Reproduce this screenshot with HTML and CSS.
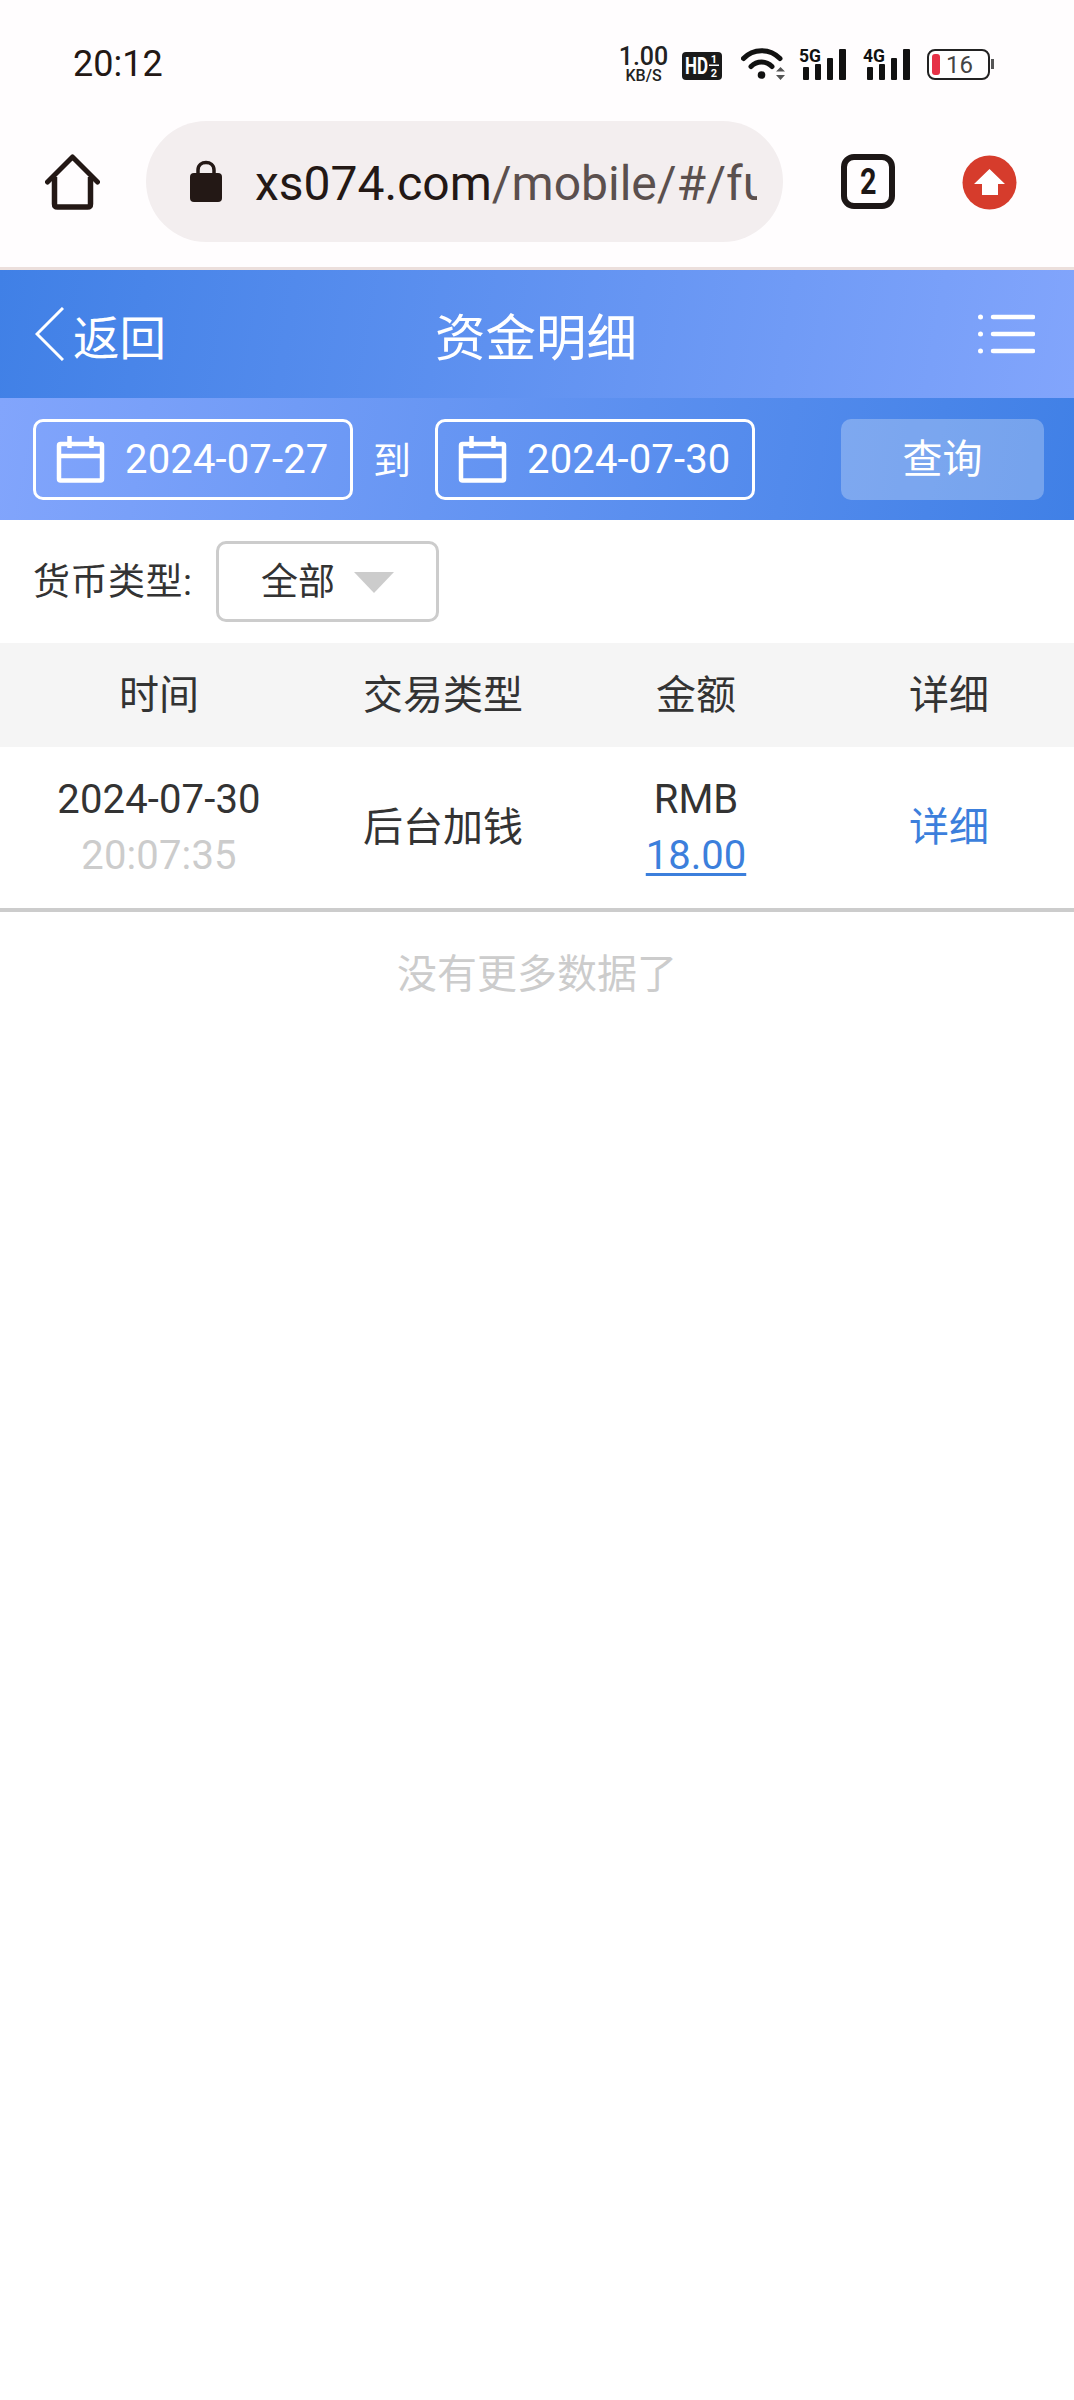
FILE: index.html
```html
<!DOCTYPE html>
<html lang="zh-CN">
<head>
  <meta charset="UTF-8" />
  <meta name="viewport" content="width=device-width, initial-scale=1.0"/>
  <title>资金明细</title>
  <link rel="stylesheet" href="styles.css">
</head>
<body>
  <div class="status">
    <span class="clock">20:12</span>
    <div class="status-icons">
      <div class="speed"><b>1.00</b><i>KB/S</i></div>
      <svg class="hd" width="40" height="28" viewBox="0 0 40 28">
        <rect width="40" height="28" rx="4" fill="#1a1a1a"/>
        <text x="3" y="22" class="hd-text" textLength="23" lengthAdjust="spacingAndGlyphs">HD</text>
        <text x="32" y="11" class="hd-frac" text-anchor="middle">1</text>
        <rect x="27" y="12.500" width="10" height="1.500" fill="#fff"/>
        <text x="32" y="25" class="hd-frac" text-anchor="middle">2</text>
      </svg>
      <svg class="wifi" width="44" height="33" viewBox="0 0 44 33">
        <path d="M2.500 11.500C12 1 29 1 39 11.500" fill="none" stroke="#111" stroke-width="5" stroke-linecap="round"/>
        <path d="M10 19.500C16 13.500 25 13.500 31 19.500" fill="none" stroke="#111" stroke-width="5" stroke-linecap="round"/>
        <circle cx="20.500" cy="28" r="3.800" fill="#111"/>
        <path d="M35 24.500L39.500 20L44 24.500Z M35 28L44 28L39.500 33Z" fill="#555"/>
      </svg>
      <svg class="signal" width="47" height="39" viewBox="0 -6 47 39">
        <text x="0" y="15" class="net" textLength="22" lengthAdjust="spacingAndGlyphs">5G</text>
        <rect x="4" y="20" width="6" height="13" rx="1" fill="#111"/>
        <rect x="16" y="17" width="6" height="16" rx="1" fill="#111"/>
        <rect x="28" y="11" width="6" height="22" rx="1" fill="#111"/>
        <rect x="40" y="2" width="7" height="31" rx="1" fill="#111"/>
      </svg>
      <svg class="signal" width="47" height="39" viewBox="0 -6 47 39">
        <text x="0" y="15" class="net" textLength="22" lengthAdjust="spacingAndGlyphs">4G</text>
        <rect x="4" y="20" width="6" height="13" rx="1" fill="#111"/>
        <rect x="16" y="17" width="6" height="16" rx="1" fill="#111"/>
        <rect x="28" y="11" width="6" height="22" rx="1" fill="#111"/>
        <rect x="40" y="2" width="7" height="31" rx="1" fill="#111"/>
      </svg>
      <svg class="battery" width="67" height="31" viewBox="0 0 67 31">
        <rect x="1" y="1" width="61" height="29" rx="7" fill="#fff" stroke="#222" stroke-width="2"/>
        <rect x="5" y="5" width="8" height="21" rx="3" fill="#e63146"/>
        <text x="19" y="24" class="batt-num">16</text>
        <rect x="64" y="10" width="3" height="10" fill="#555"/>
      </svg>
    </div>
  </div>

  <div class="toolbar">
    <svg class="home" width="55" height="56" viewBox="0 0 55 56">
      <path d="M2.500 28L27.500 3L52.500 28" fill="none" stroke="#231815" stroke-width="5" stroke-linecap="round" stroke-linejoin="round"/>
      <path d="M9.500 23V50Q9.500 53 12.500 53H42.500Q45.500 53 45.500 50V23" fill="none" stroke="#231815" stroke-width="5.500"/>
    </svg>
    <div class="urlbar">
      <svg class="lock" width="32" height="44" viewBox="0 0 32 44">
        <path d="M8 18V11C8 1 24 1 24 11V18" fill="none" stroke="#231815" stroke-width="3.500"/>
        <rect x="0" y="14" width="32" height="29" rx="4" fill="#231815"/>
      </svg>
      <div class="url"><span class="host">xs074.com</span>/mobile/#/fu</div>
    </div>
    <div class="tabs"><span>2</span></div>
    <svg class="upgrade" width="55" height="55" viewBox="0 0 55 55">
      <circle cx="27.500" cy="27.500" r="27" fill="#d63c2c"/>
      <path d="M27.500 14L43 29H36V40H20V29H12Z" fill="#fff"/>
    </svg>
  </div>

  <header class="topbar">
    <a class="back">
      <svg width="29" height="54" viewBox="0 0 29 54"><path d="M28 1L2 27L28 53" fill="none" stroke="#fff" stroke-width="3"/></svg>
      <span>返回</span>
    </a>
    <h1 class="title">资金明细</h1>
    <div class="menu-wrap">
      <svg class="menu" width="57" height="40" viewBox="0 0 57 40">
        <circle cx="2.500" cy="3" r="2.500" fill="#fff"/>
        <circle cx="2.500" cy="20" r="2.500" fill="#fff"/>
        <circle cx="2.500" cy="37" r="2.500" fill="#fff"/>
        <path d="M15 3H55M15 20H55M15 37H55" stroke="#fff" stroke-width="4.500" stroke-linecap="round"/>
      </svg>
    </div>
  </header>

  <div class="filter">
    <div class="date">
      <svg width="49" height="48" viewBox="0 0 48 48"><use href="#cal"/></svg>
      <span>2024-07-27</span>
    </div>
    <span class="to">到</span>
    <div class="date">
      <svg width="49" height="48" viewBox="0 0 48 48"><use href="#cal"/></svg>
      <span>2024-07-30</span>
    </div>
    <button class="search">查询</button>
  </div>

  <svg class="defs" width="0" height="0">
    <g id="cal" fill="none" stroke="#fff" stroke-width="4.500">
      <rect x="2.500" y="9" width="43" height="36.500" rx="1.500"/>
      <path d="M2 21H46M13 1V13M35 1V13"/>
    </g>
  </svg>

  <div class="currency">
    <label>货币类型:</label>
    <div class="select">
      <span>全部</span>
      <i class="arrow"></i>
    </div>
  </div>

  <div class="thead">
    <div>时间</div>
    <div>交易类型</div>
    <div>金额</div>
    <div>详细</div>
  </div>
  <div class="row">
    <div class="cell"><span class="day">2024-07-30</span><span class="muted">20:07:35</span></div>
    <div class="cell">后台加钱</div>
    <div class="cell"><span>RMB</span><a class="amount">18.00</a></div>
    <div class="cell"><a class="more">详细</a></div>
  </div>
  <p class="nomore">没有更多数据了</p>
</body>
</html>
```

FILE: styles.css
```css
* {
  box-sizing: border-box;
}
body {
  margin: 0;
  background: #fff;
  color: #333;
  font-family: Roboto, "Noto Sans CJK SC", sans-serif;
}

/* phone status bar */
.status {
  height: 121px;
  padding: 0 80px 0 73px;
  display: flex;
  align-items: center;
  background: #fffdfe;
}
.clock {
  font-size: 36px;
  color: #231815;
  margin-top: 6px;
}
.status-icons {
  height: 33px;
  margin-left: auto;
  margin-top: 47px;
  align-self: flex-start;
  display: flex;
  align-items: flex-end;
}
.speed {
  width: 47px;
  margin-right: 15px;
  margin-bottom: -3px;
  display: flex;
  flex-direction: column;
  align-items: center;
  color: #222;
}
.speed b {
  font-size: 25px;
  font-weight: 500;
  line-height: 22px;
}
.speed i {
  font-size: 16px;
  font-style: normal;
  font-weight: 500;
  line-height: 15px;
}
.hd {
  margin-right: 19px;
}
.hd-text {
  font: 700 24px Roboto, sans-serif;
  fill: #fff;
}
.hd-frac {
  font: 700 11px Roboto, sans-serif;
  fill: #fff;
}
.wifi {
  margin-right: 14px;
}
.net {
  font: 700 19px Roboto, sans-serif;
  fill: #111;
}
.signal {
  margin-right: 17px;
}
.batt-num {
  font: 400 24px Roboto, sans-serif;
  fill: #444;
}

/* browser toolbar */
.toolbar {
  height: 149px;
  padding-left: 45px;
  display: flex;
  align-items: flex-start;
  background: #fffdfe;
  border-bottom: 3px solid #ecdfdc;
}
.home {
  flex: none;
  margin-top: 33px;
}
.urlbar {
  flex: none;
  width: 637px;
  height: 121px;
  margin-left: 46px;
  padding-left: 44px;
  border-radius: 61px;
  background: #f3eeef;
  display: flex;
  align-items: center;
}
.lock {
  flex: none;
  margin-top: -2px;
}
.url {
  width: 502px;
  margin-left: 33px;
  margin-top: 4px;
  overflow: hidden;
  white-space: nowrap;
  font-size: 48px;
  color: #5b504e;
}
.host {
  color: #231815;
}
.tabs {
  flex: none;
  width: 54px;
  height: 55px;
  margin-top: 33px;
  margin-left: 58px;
  border: 6px solid #1d1716;
  border-radius: 13px;
  display: flex;
  align-items: center;
  justify-content: center;
  font-size: 36px;
  font-weight: 700;
  color: #1d1716;
}
.tabs span {
  transform: scaleX(.8);
}
.upgrade {
  flex: none;
  margin-top: 34px;
  margin-left: 67px;
}

/* page head */
.topbar {
  height: 128px;
  padding: 0 39px 0 35px;
  display: grid;
  grid-template-columns: 1fr auto 1fr;
  align-items: center;
  color: #fff;
  background: linear-gradient(100deg, #4080e6 0%, #82a5fc 100%);
}
.back {
  display: flex;
  align-items: center;
  font-size: 46.500px;
}
.back span {
  margin-left: 9px;
}
.title {
  margin: 0 0 0 2px;
  font-size: 50.500px;
  font-weight: 400;
}
.menu-wrap {
  display: flex;
  justify-content: flex-end;
}

.filter {
  height: 122px;
  padding: 0 30px 0 33px;
  display: flex;
  align-items: center;
  color: #fff;
  background: linear-gradient(100deg, #82a5fc 0%, #4080e6 100%);
}
.date {
  width: 320px;
  height: 81px;
  padding-left: 20px;
  border: 3px solid #fff;
  border-radius: 10px;
  display: flex;
  align-items: center;
  font-size: 40px;
  letter-spacing: .15px;
}
.date span {
  margin-left: 20px;
}
.date svg {
  flex: none;
}
.to {
  width: 78px;
  margin-right: 4px;
  padding-bottom: 3px;
  text-align: center;
  font-size: 38px;
}
.search {
  width: 203px;
  height: 81px;
  margin-left: auto;
  padding: 0 0 6px;
  border: none;
  border-radius: 10px;
  background: rgba(255, 255, 255, .27);
  color: #fff;
  font-family: inherit;
  font-size: 40px;
}
.defs {
  display: block;
  height: 0;
}

.currency {
  height: 122px;
  padding-left: 33px;
  display: flex;
  align-items: center;
  font-size: 37px;
}
.currency label {
  width: 183px;
  white-space: nowrap;
  letter-spacing: .5px;
  padding-bottom: 5px;
}
.select {
  width: 223px;
  height: 81px;
  padding-left: 42px;
  border: 3px solid #ccc;
  border-radius: 10px;
  display: flex;
  align-items: center;
}
.select span {
  padding-bottom: 5px;
}
.arrow {
  width: 0;
  height: 0;
  margin-left: 19px;
  margin-top: 2px;
  border-left: 20px solid transparent;
  border-right: 20px solid transparent;
  border-top: 21px solid #ccc;
}

/* records */
.thead, .row {
  display: grid;
  grid-template-columns: 318px 250px 256px 250px;
  font-size: 40px;
  text-align: center;
}
.thead {
  height: 104px;
  margin-top: 1px;
  padding-bottom: 7px;
  align-items: center;
  background: #f5f5f5;
}
.row {
  height: 165px;
  border-bottom: 4px solid #ccc;
}
.cell {
  display: flex;
  flex-direction: column;
  align-items: center;
  justify-content: center;
  line-height: 56px;
}
.day, .muted {
  letter-spacing: .15px;
}
.muted {
  color: #ccc;
}
.amount {
  color: #3c7fdc;
  text-decoration: underline;
  text-underline-offset: 4px;
  text-decoration-thickness: 3px;
}
.more {
  color: #3c7fdc;
}
.nomore {
  margin: 38px 0 0;
  text-align: center;
  font-size: 40px;
  line-height: 50px;
  color: #ccc;
}
```
